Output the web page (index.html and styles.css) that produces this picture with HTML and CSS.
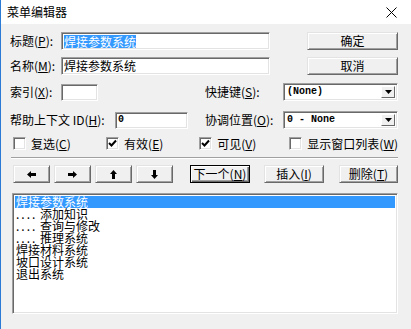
FILE: index.html
```html
<!DOCTYPE html>
<html lang="zh-CN">
<head>
  <meta charset="UTF-8">
  <title>菜单编辑器</title>
  <link rel="stylesheet" href="styles.css">
</head>
<body>
  <div class="window">
    <div class="titlebar">
      <span class="title">菜单编辑器</span>
      <svg class="close" width="11" height="11" viewBox="0 0 11 11">
        <path d="M0.5 0.5 L10.5 10.5 M10.5 0.5 L0.5 10.5" stroke="#000" stroke-width="1"/>
      </svg>
    </div>

    <div class="content">
      <div class="row r1">
        <span class="lbl l-short">标题(<u>P</u>):</span>
        <div class="field f-name"><span class="sel-text">焊接参数系统</span></div>
        <button class="btn btn-side">确定</button>
      </div>

      <div class="row r2">
        <span class="lbl l-short">名称(<u>M</u>):</span>
        <div class="field f-name">焊接参数系统</div>
        <button class="btn btn-side">取消</button>
      </div>

      <div class="row r3">
        <span class="lbl l-short">索引(<u>X</u>):</span>
        <div class="field f-index"></div>
        <div class="right-group">
          <span class="lbl">快捷键(<u>S</u>):</span>
          <div class="field combo"><span class="mono">(None)</span><span class="drop"><svg width="7" height="4" viewBox="0 0 7 4"><path d="M0 0 H7 L3.5 4 Z" fill="#000"/></svg></span></div>
        </div>
      </div>

      <div class="row r4">
        <span class="lbl l-long">帮助上下文 ID(<u>H</u>):</span>
        <div class="field f-help"><span class="mono">0</span></div>
        <div class="right-group">
          <span class="lbl">协调位置(<u>O</u>):</span>
          <div class="field combo"><span class="mono">0 - None</span><span class="drop"><svg width="7" height="4" viewBox="0 0 7 4"><path d="M0 0 H7 L3.5 4 Z" fill="#000"/></svg></span></div>
        </div>
      </div>

      <div class="row r5">
        <div class="check c1"><span class="box"></span>复选(<u>C</u>)</div>
        <div class="check c2"><span class="box"><svg width="9" height="9" viewBox="0 0 9 9"><path d="M1 4 L3.5 6.5 L8 1.5" stroke="#000" stroke-width="2" fill="none"/></svg></span>有效(<u>E</u>)</div>
        <div class="check c3"><span class="box"><svg width="9" height="9" viewBox="0 0 9 9"><path d="M1 4 L3.5 6.5 L8 1.5" stroke="#000" stroke-width="2" fill="none"/></svg></span>可见(<u>V</u>)</div>
        <div class="check c4"><span class="box"></span>显示窗口列表(<u>W</u>)</div>
      </div>

      <div class="sep"></div>

      <div class="row r6">
        <button class="btn arrow"><svg width="9" height="7" viewBox="0 0 9 7"><path d="M0 3.5 L4 0 V2 H9 V5 H4 V7 Z" fill="#000"/></svg></button>
        <button class="btn arrow"><svg width="9" height="7" viewBox="0 0 9 7"><path d="M9 3.5 L5 0 V2 H0 V5 H5 V7 Z" fill="#000"/></svg></button>
        <button class="btn arrow"><svg width="7" height="9" viewBox="0 0 7 9"><path d="M3.5 0 L7 4 H5 V9 H2 V4 H0 Z" fill="#000"/></svg></button>
        <button class="btn arrow"><svg width="7" height="9" viewBox="0 0 7 9"><path d="M3.5 9 L7 5 H5 V0 H2 V5 H0 Z" fill="#000"/></svg></button>
        <button class="btn act act-default">下一个(<u>N</u>)</button>
        <button class="btn act act-insert">插入(<u>I</u>)</button>
        <button class="btn act act-delete">删除(<u>T</u>)</button>
      </div>

      <div class="list">
        <div class="item selected">焊接参数系统</div>
        <div class="item"><span class="dots">....</span><span>添加知识</span></div>
        <div class="item"><span class="dots">....</span><span>查询与修改</span></div>
        <div class="item"><span class="dots">....</span><span>推理系统</span></div>
        <div class="item">焊接材料系统</div>
        <div class="item">坡口设计系统</div>
        <div class="item">退出系统</div>
      </div>
    </div>
  </div>
</body>
</html>
```

FILE: styles.css
```css
body {
  margin: 0;
  overflow: hidden;
  background: #f0f0f0;
}

.window {
  width: 411px;
  height: 329px;
  box-sizing: border-box;
  background: #f0f0f0;
  border-left: 1px solid #2b7bd4;
  font: 12px/14px "Noto Sans CJK SC", sans-serif;
  color: #000;
}

u {
  text-decoration: underline;
  text-underline-offset: 1px;
}

.titlebar {
  height: 24px;
  background: #fff;
  display: flex;
  align-items: center;
  justify-content: space-between;
  padding: 0 14px 0 6px;
}

.close {
  display: block;
}

.content {
  padding: 8px 13px 0 9px;
}

.row {
  display: flex;
  align-items: center;
  height: 18px;
}

.r2 { margin-top: 7px; }
.r3 { margin-top: 8px; }
.r4 { margin-top: 10px; }

.lbl {
  white-space: nowrap;
}

.l-short { width: 51px; }
.l-long { width: 105px; }

/* sunken edit box */
.field {
  height: 18px;
  box-sizing: border-box;
  background: #fff;
  border-top: 1px solid #a0a0a0;
  border-left: 1px solid #a0a0a0;
  border-right: 1px solid #fff;
  border-bottom: 1px solid #fff;
  box-shadow: inset 1px 1px 0 #696969, inset -1px -1px 0 #e3e3e3;
  padding: 0 2px;
  display: flex;
  align-items: center;
  white-space: nowrap;
}

.f-name { width: 209px; }
.f-index { width: 37px; height: 17px; }
.f-help { width: 73px; height: 17px; }

.sel-text {
  background: #3399ff;
  color: #fff;
  line-height: 13px;
}

.mono {
  font: bold 10px/12px "Liberation Mono", monospace;
}

.right-group {
  margin-left: auto;
  width: 193px;
  display: flex;
  align-items: center;
  justify-content: space-between;
}

.combo {
  width: 115px;
  padding: 0 2px 0 3px;
  justify-content: space-between;
}

.drop {
  width: 14px;
  height: 12px;
  box-sizing: border-box;
  background: #f0f0f0;
  border-top: 1px solid #fff;
  border-left: 1px solid #fff;
  border-right: 1px solid #696969;
  border-bottom: 1px solid #696969;
  display: flex;
  align-items: center;
  justify-content: center;
}

/* raised push button */
.btn {
  height: 18px;
  box-sizing: border-box;
  background: #f0f0f0;
  border-top: 1px solid #e3e3e3;
  border-left: 1px solid #e3e3e3;
  border-right: 1px solid #696969;
  border-bottom: 1px solid #696969;
  box-shadow: inset 1px 1px 0 #fff, inset -1px -1px 0 #a0a0a0;
  font: inherit;
  color: #000;
  padding: 0;
  display: flex;
  align-items: center;
  justify-content: center;
  white-space: nowrap;
}

.btn-side {
  margin-left: auto;
  width: 91px;
}

.r5 {
  margin-top: 8px;
  height: 13px;
  padding-left: 3px;
}

.check {
  display: flex;
  align-items: center;
  white-space: nowrap;
}

.c1, .c2 { width: 94px; }
.c3 { width: 91px; }

.box {
  width: 13px;
  height: 13px;
  box-sizing: border-box;
  background: #fff;
  border-top: 1px solid #a0a0a0;
  border-left: 1px solid #a0a0a0;
  border-right: 1px solid #fff;
  border-bottom: 1px solid #fff;
  box-shadow: inset 1px 1px 0 #696969, inset -1px -1px 0 #e3e3e3;
  margin-right: 5px;
  display: flex;
  align-items: center;
  justify-content: center;
}

.sep {
  margin: 7px 0 0 1px;
  height: 1px;
  background: #a0a0a0;
  border-bottom: 1px solid #fff;
}

.r6 {
  margin-top: 6px;
  padding-left: 3px;
}

.arrow {
  width: 37px;
  margin-right: 4px;
}

.act {
  width: 60px;
}

.act-default {
  margin-left: 13px;
  border: 1px solid #000;
  box-shadow: inset 1px 1px 0 #fff, inset -1px -1px 0 #696969, inset -2px -2px 0 #a0a0a0;
}

.act-insert { margin-left: 14px; }
.act-delete { margin-left: 15px; width: 59px; }

.list {
  margin: 10px 0 0 2px;
  height: 121px;
  box-sizing: border-box;
  background: #fff;
  border-top: 1px solid #a0a0a0;
  border-left: 1px solid #a0a0a0;
  border-right: 1px solid #fff;
  border-bottom: 1px solid #fff;
  box-shadow: inset 1px 1px 0 #696969, inset -1px -1px 0 #e3e3e3;
  padding: 2px 2px 0 2px;
}

.item {
  display: flex;
  height: 12px;
  line-height: 12px;
  padding-left: 1px;
  white-space: nowrap;
}

.item.selected {
  background: #3399ff;
  color: #fff;
}

.dots {
  width: 24px;
  flex: none;
  letter-spacing: 2px;
}
```
